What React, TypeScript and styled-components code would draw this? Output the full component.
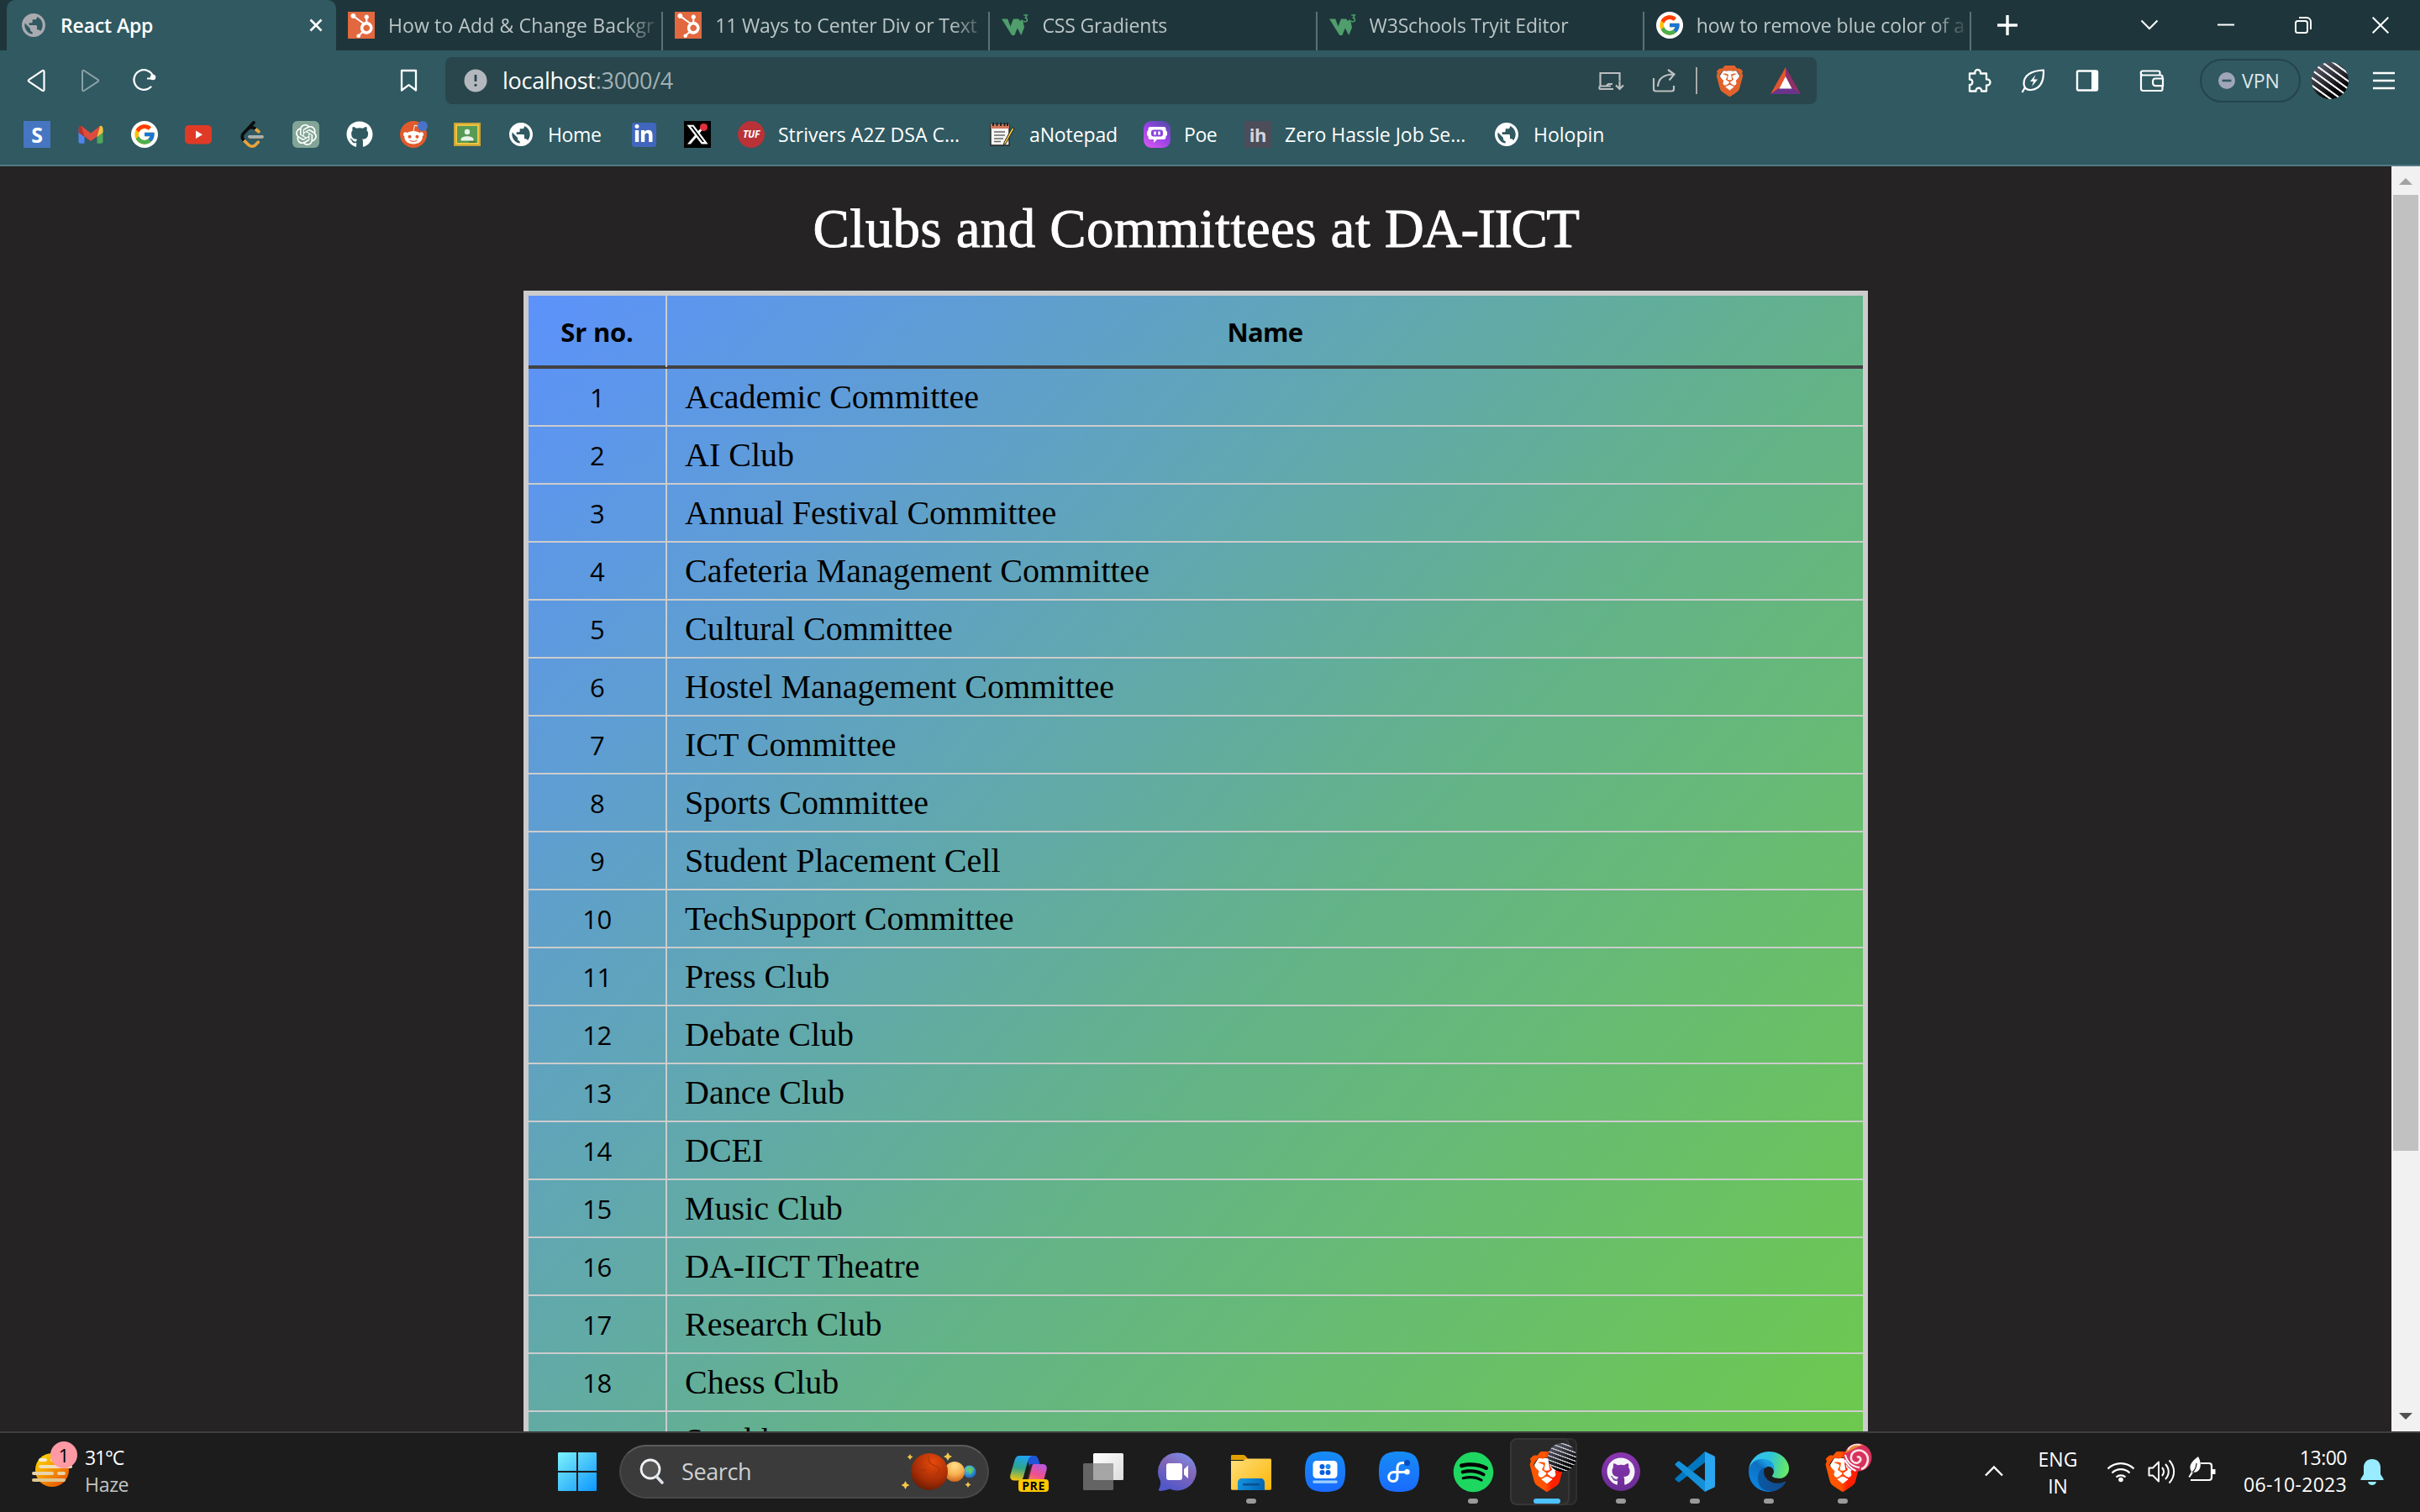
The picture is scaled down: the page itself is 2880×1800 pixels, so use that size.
import React from 'react';
import styled, { createGlobalStyle, css } from 'styled-components';
import { FaHubspot, FaGithub, FaSpotify, FaRedditAlien, FaLinkedinIn } from 'react-icons/fa';
import { FaXTwitter } from 'react-icons/fa6';
import { FcGoogle } from 'react-icons/fc';
import { SiOpenai, SiLeetcode, SiBrave } from 'react-icons/si';

const ui = '"Open Sans", "Noto Sans", sans-serif';
const serif = '"Liberation Serif", "Times New Roman", serif';

const Global = createGlobalStyle`
  * { box-sizing: border-box; }
  html, body { margin: 0; padding: 0; overflow: hidden; background: #252323; }
  svg { display: block; flex: none; }
`;

const Screen = styled.div`
  width: 2880px;
  height: 1800px;
  display: flex;
  flex-direction: column;
  font-family: ${ui};
  color: #fff;
`;

/* ---------- shared pieces ---------- */

const Glyph = styled.svg.attrs({ fill: 'none' })<{ $w: number; $h: number; $ml?: number }>`
  width: ${(p) => p.$w}px;
  height: ${(p) => p.$h}px;
  margin-left: ${(p) => p.$ml ?? 0}px;
`;

const Label = styled.span<{ $w?: number; $size?: number; $ls?: number; $ml?: number; $weight?: number; $color?: string }>`
  display: block;
  flex: none;
  white-space: nowrap;
  width: ${(p) => (p.$w ? `${p.$w}px` : 'auto')};
  margin-left: ${(p) => p.$ml ?? 0}px;
  font-size: ${(p) => p.$size ?? 23}px;
  line-height: 32px;
  letter-spacing: ${(p) => p.$ls ?? 0}px;
  font-weight: ${(p) => p.$weight ?? 400};
  color: ${(p) => p.$color ?? '#fff'};
`;

const Tile = styled.span<{ $bg?: string; $fg?: string; $radius?: number; $icon?: number; $w?: number; $h?: number }>`
  display: flex;
  flex: none;
  align-items: center;
  justify-content: center;
  width: ${(p) => p.$w ?? 32}px;
  height: ${(p) => p.$h ?? 32}px;
  border-radius: ${(p) => p.$radius ?? 0}px;
  background: ${(p) => p.$bg ?? 'transparent'};
  color: ${(p) => p.$fg ?? '#fff'};
  font-size: ${(p) => p.$icon ?? 28}px;
`;

const Avatar = styled.span<{ $size: number; $angle: number; $step: number; $line: string; $ml?: number }>`
  display: block;
  flex: none;
  width: ${(p) => p.$size}px;
  height: ${(p) => p.$size}px;
  margin-left: ${(p) => p.$ml ?? 0}px;
  border-radius: 50%;
  background:
    repeating-linear-gradient(
      ${(p) => p.$angle}deg,
      transparent 0 ${(p) => p.$step * 0.62}px,
      ${(p) => p.$line} ${(p) => p.$step * 0.7}px ${(p) => p.$step * 0.9}px,
      transparent ${(p) => p.$step}px
    ),
    linear-gradient(150deg, #66687a 0%, #3a3b44 35%, #050506 75%);
`;

const Globe = ({ color }: { color: string }) => (
  <Glyph $w={32} $h={32} viewBox="0 0 24 24">
    <path
      fill={color}
      d="M12 1.5C6.2 1.5 1.5 6.2 1.5 12S6.2 22.500 12 22.500 22.500 17.800 22.500 12 17.800 1.500 12 1.500zm-1 18.400c-3.950-.49-7-3.850-7-7.930 0-.62.08-1.210.21-1.790L9 15v1c0 1.100.9 2 2 2v1.930zm6.900-2.540c-.26-.81-1-1.390-1.900-1.390h-1v-3c0-.55-.45-1-1-1H8v-2h2c.55 0 1-.45 1-1V7h2c1.100 0 2-.9 2-2v-.41c2.930 1.190 5 4.060 5 7.410 0 2.080-.8 3.970-2.100 5.390z"
    />
  </Glyph>
);

const Hubspot = () => <Tile $bg="#e2683f" $icon={29}><FaHubspot /></Tile>;
const Google = () => <Tile $bg="#fff" $radius={16} $icon={28}><FcGoogle /></Tile>;
const W3 = () => (
  <Glyph $w={32} $h={32} viewBox="0 0 32 32">
    <path d="M0 7.500h7.200l3.300 9 3.500-9h6.200l1.400 2.200 3.400-1.500 2 9.500-3.800 9.300-4.400-8.600-3.400 8.600h-3.200z" fill="#4f9e6c" transform="translate(0,1)" />
    <path d="M26.300 4h4l-1.900 3.200c2.700.2 2.800 4.800-.5 4.600-1 0-1.500-.4-2-1.200" stroke="#4f9e6c" strokeWidth="1.500" />
  </Glyph>
);

/* ---------- tab strip ---------- */

const TabStrip = styled.div`
  height: 60px;
  flex: none;
  display: flex;
  background: #1e363b;
  padding-left: 8px;
`;

const ActiveTab = styled.div`
  width: 392px;
  height: 60px;
  padding: 0 16px;
  display: flex;
  align-items: center;
  background: #305961;
  border-radius: 10px 10px 0 0;
`;

const Tab = styled.div`
  width: 389.2px;
  height: 46px;
  margin-top: 14px;
  padding: 0 6px 14px 14px;
  display: flex;
  align-items: center;
  gap: 16px;
  border-right: 2px solid #577278;
`;

const TabTitle = styled.div<{ $ls?: number }>`
  flex: 1;
  white-space: nowrap;
  font-size: 23px;
  line-height: 32px;
  color: #bcc5c6;
  letter-spacing: ${(p) => p.$ls ?? -0.15}px;
  mask-image: linear-gradient(90deg, #000 88%, transparent 102%);
`;

const Spacer = styled.div`
  flex: 1;
`;

const WindowButtons = styled.div`
  display: flex;
  align-items: center;
  margin-left: 31px;
  height: 60px;
`;

/* ---------- address bar ---------- */

const Toolbar = styled.div`
  height: 72px;
  flex: none;
  display: flex;
  align-items: center;
  background: #305961;
  padding-left: 30px;
`;

const UrlBox = styled.div`
  width: 1632px;
  height: 56px;
  margin: 0 0 0 32px;
  padding: 0 18px 0 22px;
  display: flex;
  align-items: center;
  background: #28464b;
  border-radius: 8px;
`;

const Port = styled.span`
  color: #a3b1b4;
`;

const Divider = styled.div`
  width: 2px;
  height: 32px;
  margin: 0 20px 0 22px;
  background: #a9a9a9;
`;

const VpnPill = styled.div`
  width: 120px;
  height: 52px;
  margin-left: 42px;
  padding-left: 20px;
  display: flex;
  align-items: center;
  gap: 8px;
  border: 2px solid #25444b;
  border-radius: 26px;
`;

/* ---------- bookmarks ---------- */

const Bookmarks = styled.div`
  height: 66px;
  flex: none;
  display: flex;
  align-items: flex-start;
  padding: 12px 0 0 28px;
  gap: 32px;
  background: #305961;
  border-bottom: 2px solid #527a84;
`;

const Bookmark = styled.div<{ $w: number }>`
  width: ${(p) => p.$w}px;
  display: flex;
  gap: 16px;
`;

const Anchor = styled.span`
  position: relative;
  display: block;
  flex: none;
`;

const Dot = styled.span<{ $size: number; $color: string; $x: number; $y: number }>`
  position: absolute;
  right: ${(p) => p.$x}px;
  top: ${(p) => p.$y}px;
  width: ${(p) => p.$size}px;
  height: ${(p) => p.$size}px;
  border-radius: 50%;
  background: ${(p) => p.$color};
`;

const TinyText = styled.span<{ $size: number; $italic?: boolean }>`
  font-size: ${(p) => p.$size}px;
  font-weight: 700;
  font-style: ${(p) => (p.$italic ? 'italic' : 'normal')};
  line-height: 32px;
  letter-spacing: -0.3px;
`;

/* ---------- page ---------- */

const Viewport = styled.main`
  height: 1506px;
  flex: none;
  display: flex;
  overflow: hidden;
  background: #252323;
`;

const Content = styled.div`
  flex: 1;
  display: flex;
  flex-direction: column;
  align-items: center;
`;

const Heading = styled.h1`
  margin: 0;
  height: 148px;
  flex: none;
  font-family: ${serif};
  font-size: 65px;
  font-weight: 400;
  line-height: 148px;
  letter-spacing: 0.36px;
  -webkit-text-stroke: 0.9px #fff;
`;

const Acronym = styled.span`
  letter-spacing: -1.6px;
`;

const Table = styled.div`
  width: 1600px;
  height: 1755px;
  flex: none;
  border: 6px solid #cccccc;
  background: linear-gradient(to bottom right, #5c92fb 0%, #63b28a 50%, #6eca4b 91%, #70cf40 100%) padding-box;
  color: #000;
`;

const Row = styled.div<{ $head?: boolean }>`
  display: grid;
  grid-template-columns: 165px 1fr;
  height: ${(p) => (p.$head ? 87 : 69)}px;
  border-bottom: ${(p) => (p.$head ? '4px solid #404142' : '2px solid #cccccc')};
`;

const HeadCell = styled.div<{ $divided?: boolean; $ls?: number }>`
  font-size: 31px;
  font-weight: 700;
  line-height: 83px;
  padding-top: 2px;
  letter-spacing: ${(p) => p.$ls ?? 0}px;
  text-align: center;
  ${(p) => p.$divided && css`border-right: 2px solid #cccccc;`}
`;

const NumCell = styled.div`
  padding-top: 1px;
  font-size: 31px;
  line-height: 67px;
  letter-spacing: -0.5px;
  text-align: center;
  border-right: 2px solid #cccccc;
`;

const NameCell = styled.div`
  padding-left: 21px;
  font-family: ${serif};
  font-size: 40px;
  line-height: 67px;
`;

const Scrollbar = styled.div`
  width: 34px;
  flex: none;
  display: flex;
  flex-direction: column;
  align-items: center;
  background: #f1f1f1;
  padding: 14px 0;
`;

const Thumb = styled.div`
  width: 30px;
  height: 1138px;
  margin-top: 12px;
  background: #c1c1c1;
`;

/* ---------- taskbar ---------- */

const Taskbar = styled.footer`
  height: 96px;
  flex: none;
  display: flex;
  background: #1c1c1c;
  border-top: 2px solid #3f3f40;
`;

const Weather = styled.div`
  width: 643px;
  padding: 10px 0 0 36px;
  display: flex;
  gap: 5px;
`;

const WeatherText = styled.div`
  padding-top: 3px;
`;

const Lines = styled.div<{ $align?: string; $w?: number; $ml?: number }>`
  width: ${(p) => (p.$w ? `${p.$w}px` : 'auto')};
  margin-left: ${(p) => p.$ml ?? 0}px;
  padding-top: 15px;
  text-align: ${(p) => p.$align ?? 'left'};
`;

const Cell = styled.div`
  position: relative;
  width: 88px;
  height: 94px;
  padding-top: 22px;
  display: flex;
  flex-direction: column;
  align-items: center;
`;

const Indicator = styled.div<{ $active?: boolean }>`
  width: ${(p) => (p.$active ? 32 : 12)}px;
  height: 6px;
  margin-top: 8px;
  border-radius: 3px;
  background: ${(p) => (p.$active ? '#4cc2ff' : '#9a9a9a')};
  z-index: 1;
`;

const SearchBox = styled.div`
  width: 440px;
  height: 64px;
  margin: 14px 4px 0 6px;
  padding: 0 12px 0 22px;
  display: flex;
  align-items: center;
  background: #3b3b3b;
  border: 2px solid #484848;
  border-top-color: #5c5c5c;
  border-radius: 32px;
`;

const StackBack = styled.div`
  position: absolute;
  left: 36px;
  top: 6px;
  width: 44px;
  height: 80px;
  border-radius: 8px;
  background: #252525;
  border: 2px solid #303030;
`;

const StackFront = styled(StackBack)`
  left: 0;
  width: 71px;
  background: #2a2a2a;
  border-color: #373737;
`;

const AppIcon = styled.div`
  position: relative;
  width: 48px;
  height: 48px;
  display: flex;
  justify-content: center;
  align-items: center;
`;

const Badge = styled.div<{ $left: number; $top: number }>`
  position: absolute;
  left: ${(p) => p.$left}px;
  top: ${(p) => p.$top}px;
`;

const WeatherBadge = styled.div`
  position: absolute;
  left: 24px;
  top: 0;
  width: 32px;
  height: 32px;
  border-radius: 50%;
  background: #ff99a4;
  color: #000;
  font-size: 22px;
  line-height: 32px;
  text-align: center;
`;

const PreTag = styled.div`
  position: absolute;
  left: 11px;
  top: 33px;
  width: 36px;
  height: 15px;
  border-radius: 4px;
  background: #ffc800;
  color: #000;
  font-size: 14px;
  font-weight: 700;
  line-height: 15px;
  letter-spacing: 0.6px;
  text-align: center;
`;

const Tray = styled.div`
  margin-left: auto;
  display: flex;
  padding-right: 43px;
`;

const TrayGlyph = styled(Glyph)<{ $top: number }>`
  margin-top: ${(p) => p.$top}px;
`;

const Clock = styled.div`
  width: 155px;
  padding-top: 13px;
  display: flex;
  flex-direction: column;
  align-items: flex-end;
`;

/* ---------- app icons ---------- */

const Lion = ({ size, from, to, id }: { size: number; from: string; to: string; id: string }) => (
  <Glyph $w={size} $h={size} viewBox="0 0 24 24">
    <defs>
      <linearGradient id={id} x1="0" y1="0" x2="24" y2="0" gradientUnits="userSpaceOnUse">
        <stop offset=".45" stopColor={from} />
        <stop offset=".62" stopColor={to} />
      </linearGradient>
    </defs>
    <path d="M7 4h10l2.500 4-2.500 8-5 4-5-4-2.500-8z" fill="#fff" />
    <SiBrave size={24} fill={`url(#${id})`} />
  </Glyph>
);

const LeetCode = () => (
  <Glyph $w={32} $h={32} viewBox="0 0 24 24">
    <defs>
      <linearGradient id="lc" x1="3" y1="5" x2="17" y2="19" gradientUnits="userSpaceOnUse">
        <stop offset=".5" stopColor="#0c0c0c" />
        <stop offset=".51" stopColor="#e8a33c" />
      </linearGradient>
    </defs>
    <SiLeetcode size={24} fill="url(#lc)" />
    <path d="M9.500 14.100h11.500" stroke="#a8b0b2" strokeWidth="2.600" strokeLinecap="round" />
  </Glyph>
);

const Swirl = () => (
  <Glyph $w={34} $h={34} viewBox="0 0 34 34">
    <circle cx="17" cy="17" r="16.500" fill="#d8315c" />
    <path d="M2 12A16 16 0 0 1 24 2.500L18 4z" fill="#e88a3a" />
    <path d="M16 17c3-2 6 2 3 5-4 4-11 0-10-6 1-7 10-10 16-5 7 6 4 17-4 20" stroke="#fbe3e6" strokeWidth="2.600" />
    <path d="M2 14c2 8 8 14 17 15M1.500 20c3 6 7 10 13 13" stroke="#fff" strokeWidth="2" />
    <path d="M5 8C8 3 14 1 20 2" stroke="#fbe3e6" strokeWidth="1.800" />
  </Glyph>
);

const Edge = () => (
  <Glyph $w={48} $h={48} viewBox="0 0 256 256">
    <defs>
      <linearGradient id="eg1" x1="58" y1="177" x2="237" y2="177" gradientUnits="userSpaceOnUse">
        <stop stopColor="#0c59a4" />
        <stop offset="1" stopColor="#114a8b" />
      </linearGradient>
      <linearGradient id="eg2" x1="150" y1="100" x2="40" y2="225" gradientUnits="userSpaceOnUse">
        <stop stopColor="#1b9de2" />
        <stop offset=".3" stopColor="#0f6fc0" />
        <stop offset="1" stopColor="#0a84e0" />
      </linearGradient>
      <linearGradient id="eg3" x1="20" y1="60" x2="250" y2="120" gradientUnits="userSpaceOnUse">
        <stop stopColor="#35c1f1" />
        <stop offset=".45" stopColor="#2fc4dc" />
        <stop offset=".85" stopColor="#5adf78" />
        <stop offset="1" stopColor="#66eb6e" />
      </linearGradient>
    </defs>
    <path fill="url(#eg3)" d="M152.330 148.860c-.81 1.050-3.300 2.500-3.300 5.660 0 2.610 1.700 5.120 4.720 7.230 14.380 10 41.490 8.680 41.560 8.680A59.560 59.560 0 0 0 225.580 162a61.380 61.380 0 0 0 30.430-52.880c.26-22.410-8-37.310-11.340-43.910C223.450 23.790 177.710 0 128 0A128 128 0 0 0 0 126.200C.48 89.660 36.800 60.200 80 60.200c3.500 0 23.460.34 42 10.070 16.340 8.580 24.900 18.940 30.850 29.210 6.180 10.670 7.280 24.150 7.280 29.520s-2.740 13.330-7.800 19.860z" />
    <path fill="url(#eg2)" d="M105.730 241.420A79.200 79.200 0 0 1 83 220.080 80.720 80.720 0 0 1 112.500 100c3.120-1.470 8.450-4.130 15.540-4a32.350 32.350 0 0 1 25.690 13 31.880 31.880 0 0 1 6.360 18.660c0-.21 24.460-79.600-80-79.600-43.900 0-80 41.660-80 78.210a130.150 130.150 0 0 0 12.110 56 128 128 0 0 0 156.380 67.110 75.550 75.550 0 0 1-62.780-8z" />
    <path fill="url(#eg1)" d="M231.050 190.540a93.730 93.730 0 0 1-10.540 4.710 101.870 101.870 0 0 1-35.900 6.460c-47.320 0-88.540-32.550-88.540-74.320A31.480 31.480 0 0 1 112.500 100c-42.800 1.800-53.800 46.400-53.800 72.530 0 73.880 68.090 81.370 82.760 81.370 7.910 0 19.840-2.300 27-4.560l1.310-.44a128.340 128.340 0 0 0 66.630-52.800 4 4 0 0 0-5.350-5.560z" />
  </Glyph>
);

const VsCode = () => (
  <Glyph $w={48} $h={48} viewBox="0 0 48 48">
    <path d="M36 0L1 31.500c-.8.700-.8 1.500 0 2.200l2.600 2.400c.7.600 1.500.6 2.200.1L36 13z" fill="#0078c0" />
    <path d="M36 48L1 16.500c-.8-.7-.8-1.500 0-2.200l2.600-2.400c.7-.6 1.500-.6 2.200-.1L36 35z" fill="#1390d8" />
    <path d="M36 0l10.500 5c.9.500 1.500 1.300 1.500 2.300v33.400c0 1-.6 1.800-1.500 2.300L36 48z" fill="#29a7f0" />
  </Glyph>
);

const Copilot = () => (
  <Glyph $w={48} $h={48} viewBox="0 0 48 48">
    <defs>
      <linearGradient id="cp1" x1="12" y1="5" x2="8" y2="34" gradientUnits="userSpaceOnUse">
        <stop stopColor="#1fa3ee" />
        <stop offset=".5" stopColor="#2fa58a" />
        <stop offset="1" stopColor="#f2c511" />
      </linearGradient>
      <linearGradient id="cp2" x1="40" y1="14" x2="30" y2="38" gradientUnits="userSpaceOnUse">
        <stop stopColor="#b05ae8" />
        <stop offset=".6" stopColor="#f0508c" />
        <stop offset="1" stopColor="#f9824e" />
      </linearGradient>
    </defs>
    <path d="M20 5h10c3 0 4 2 5 5l1.500 5h-6c-3 0-5 1-6 4z" fill="#1f55d6" />
    <path d="M13 5h14c-3 1-4 3-5 7l-5 18c-1 3-2 4.500-5 4.500H6c-4 0-5.500-3-4.500-7l5-17C7.500 7 9 5 13 5z" fill="url(#cp1)" />
    <path d="M30 15h10c4 0 5.500 3 4.500 7l-3 11c-1 3-3 4-6 4H12c3-1 8 0 9.500-3l4-15c1-3 2-4 4.500-4z" fill="url(#cp2)" />
    <path d="M25 15h3l-5 19h-6z" fill="#1c1c1c" opacity=".75" />
  </Glyph>
);

const TaskView = () => (
  <Glyph $w={48} $h={48} viewBox="0 0 48 48">
    <defs>
      <linearGradient id="tv" x1="12" y1="2" x2="48" y2="34" gradientUnits="userSpaceOnUse">
        <stop stopColor="#fff" />
        <stop offset="1" stopColor="#dcdcdc" />
      </linearGradient>
    </defs>
    <rect x="12" y="2" width="36" height="32" rx="1.500" fill="url(#tv)" />
    <rect x="0" y="14" width="36" height="32" rx="1.500" fill="#646464" />
    <path d="M12 14h22.500a1.500 1.500 0 0 1 1.500 1.500V34H13.500a1.500 1.500 0 0 1-1.500-1.500z" fill="#a5a5a5" />
  </Glyph>
);

const Chat = () => (
  <Glyph $w={48} $h={48} viewBox="0 0 48 48">
    <defs>
      <linearGradient id="ch" x1="36" y1="4" x2="16" y2="44" gradientUnits="userSpaceOnUse">
        <stop stopColor="#7a8be6" />
        <stop offset=".4" stopColor="#8467b8" />
        <stop offset="1" stopColor="#5257c9" />
      </linearGradient>
    </defs>
    <path d="M24.500 1.500a22.500 22.500 0 1 1-9.500 43c-4 1.500-8 2.500-11.500 2.500-1.500 0-2-1-1.300-2.200 1.500-3 2.300-6.300 1.800-9.800A22.500 22.500 0 0 1 24.500 1.500z" fill="url(#ch)" />
    <rect x="11" y="14" width="19" height="20" rx="3" fill="#fff" />
    <path d="M32 21l5-4.500v15.500l-5-4.500z" fill="#fff" />
  </Glyph>
);

const Folder = () => (
  <Glyph $w={48} $h={48} viewBox="0 0 48 48">
    <defs>
      <linearGradient id="fo" x1="6" y1="8" x2="44" y2="46" gradientUnits="userSpaceOnUse">
        <stop stopColor="#ffdc72" />
        <stop offset="1" stopColor="#fbb80e" />
      </linearGradient>
      <linearGradient id="fb" x1="8" y1="32" x2="40" y2="46" gradientUnits="userSpaceOnUse">
        <stop stopColor="#1597e0" />
        <stop offset="1" stopColor="#0062b4" />
      </linearGradient>
    </defs>
    <path d="M0 5.500C0 4.500.7 4 1.500 4H14c1.500 0 2.500.5 3.500 1.500L21 10H0z" fill="#e0a100" />
    <path d="M0 11h14l5-2.500h27.500c1 0 1.500.7 1.500 1.500v34c0 1-.6 1.800-1.500 1.800h-45C.6 45.800 0 45 0 44z" fill="url(#fo)" />
    <path d="M8 46V37c0-3 2-5 5-5h22c3 0 5 2 5 5v9z" fill="url(#fb)" />
    <rect x="14" y="38" width="20" height="2.400" rx="1" fill="#0a4f8f" />
  </Glyph>
);

const blue = (
  <>
    <defs>
      <linearGradient id="bl" x1="24" y1="0" x2="24" y2="48" gradientUnits="userSpaceOnUse">
        <stop stopColor="#168cf4" />
        <stop offset="1" stopColor="#1a6bff" />
      </linearGradient>
    </defs>
    <path d="M24 0c18 0 24 6 24 24s-6 24-24 24S0 42 0 24 6 0 24 0z" fill="url(#bl)" />
  </>
);

const Dex = () => (
  <Glyph $w={48} $h={48} viewBox="0 0 48 48">
    {blue}
    <rect x="9.500" y="11" width="29" height="21" rx="4.500" fill="#fff" />
    <rect x="9.500" y="34.500" width="29" height="3.200" rx="1" fill="#9fd0ff" />
    <circle cx="20.500" cy="18" r="3" fill="#0a5fe0" />
    <circle cx="27.500" cy="18" r="3" fill="#1f8af5" />
    <circle cx="20.500" cy="25" r="3" fill="#0a5fe0" />
    <circle cx="27.500" cy="25" r="3" fill="#0a5fe0" />
  </Glyph>
);

const Flow = () => (
  <Glyph $w={48} $h={48} viewBox="0 0 48 48">
    {blue}
    <path d="M33 13.500h-5c-4 0-6 2.500-6 6v10c0 4-2 6-5 6-3.200 0-5.300-2-5.300-4.800 0-3.700 2.300-6.200 6.300-6.200h15" stroke="#fff" strokeWidth="3" strokeLinecap="round" />
    <circle cx="33.500" cy="13.500" r="3.500" fill="#0a4cc0" />
    <circle cx="33.500" cy="24.300" r="3.200" fill="#fff" />
  </Glyph>
);

const Planets = () => (
  <Glyph $w={90} $h={52} viewBox="0 0 90 52">
    <defs>
      <radialGradient id="p1" cx=".6" cy=".25" r=".85">
        <stop stopColor="#e84a0a" />
        <stop offset=".6" stopColor="#a62d06" />
        <stop offset="1" stopColor="#5c1804" />
      </radialGradient>
      <radialGradient id="p2" cx=".5" cy=".2" r=".9">
        <stop stopColor="#ffdf8a" />
        <stop offset=".5" stopColor="#f8b050" />
        <stop offset="1" stopColor="#c0500e" />
      </radialGradient>
      <radialGradient id="p3" cx=".4" cy=".3" r=".8">
        <stop stopColor="#5fd8c8" />
        <stop offset="1" stopColor="#1458c8" />
      </radialGradient>
    </defs>
    <circle cx="81" cy="26" r="7.500" fill="url(#p3)" />
    <path d="M79 21c3-1 5 0 7 2l-2 3-2 4-2-4-3-2z" fill="#5cc86a" />
    <circle cx="63" cy="26" r="12" fill="url(#p2)" />
    <circle cx="33" cy="26" r="22" fill="url(#p1)" />
    <path d="M32 8c-2 7 5 10 10 12s3 8-2 10M15 24c5-3 9 2 14 0" stroke="#a8320a" strokeWidth="1.500" opacity=".7" />
    <path d="M10 5l1.200 2.300L13.500 8.500l-2.300 1.200L10 12l-1.200-2.300L6.500 8.500l2.300-1.200zM55 3l1.700 3.300L60 8l-3.300 1.700L55 13l-1.700-3.300L50 8l3.300-1.700zM4.500 37l1.700 3.300L9.500 42l-3.300 1.700L4.500 47l-1.700-3.300L-.5 42l3.300-1.700zM79 38l1.200 2.300 2.300 1.200-2.300 1.200L79 45l-1.200-2.300-2.300-1.200 2.300-1.200z" fill="#f4c84a" />
  </Glyph>
);

const names = [
  'Academic Committee', 'AI Club', 'Annual Festival Committee', 'Cafeteria Management Committee', 'Cultural Committee',
  'Hostel Management Committee', 'ICT Committee', 'Sports Committee', 'Student Placement Cell', 'TechSupport Committee',
  'Press Club', 'Debate Club', 'Dance Club', 'DCEI', 'Music Club', 'DA-IICT Theatre', 'Research Club', 'Chess Club', 'Sambhav',
];

export default function App() {
  return (
    <Screen>
      <Global />

      <TabStrip>
        <ActiveTab>
          <Globe color="#a9aab0" />
          <Label $ml={16} $weight={600} $ls={-0.15} $w={296}>React App</Label>
          <Glyph $w={16} $h={16} viewBox="0 0 16 16"><path d="M1.500 1.500l13 13M14.500 1.500l-13 13" stroke="#fff" strokeWidth="2.600" /></Glyph>
        </ActiveTab>
        <Tab><Hubspot /><TabTitle $ls={0.12}>How to Add &amp; Change Backgr</TabTitle></Tab>
        <Tab><Hubspot /><TabTitle>11 Ways to Center Div or Text</TabTitle></Tab>
        <Tab><W3 /><TabTitle>CSS Gradients</TabTitle></Tab>
        <Tab><W3 /><TabTitle>W3Schools Tryit Editor</TabTitle></Tab>
        <Tab><Google /><TabTitle $ls={-0.05}>how to remove blue color of a</TabTitle></Tab>
        <WindowButtons>
          <Glyph $w={24} $h={24} viewBox="0 0 24 24"><path d="M12 1v22M1 12h22" stroke="#fff" strokeWidth="3.400" strokeLinecap="round" /></Glyph>
          <Glyph $ml={146} $w={22} $h={14} viewBox="0 0 22 14"><path d="M1.500 1.500L11 11l9.500-9.500" stroke="#fff" strokeWidth="2" /></Glyph>
          <Glyph $ml={70} $w={20} $h={20} viewBox="0 0 20 20"><path d="M0 9.500h20" stroke="#fff" strokeWidth="2" /></Glyph>
          <Glyph $ml={72} $w={20} $h={20} viewBox="0 0 20 20"><rect x="1" y="5" width="14" height="14" rx="2.500" stroke="#fff" strokeWidth="2" /><path d="M5 1h9a5 5 0 0 1 5 5v9" stroke="#fff" strokeWidth="2" /></Glyph>
          <Glyph $ml={72} $w={20} $h={20} viewBox="0 0 20 20"><path d="M.7.700l18.600 18.600M19.300.700L.7 19.300" stroke="#fff" strokeWidth="2" /></Glyph>
        </WindowButtons>
      </TabStrip>

      <Toolbar>
        <Glyph $w={26} $h={28} viewBox="0 0 26 28"><path d="M22.500 3.200v21.600c0 1.400-1.400 1.700-2.400.9L4.500 15.200c-1-.8-1-1.700 0-2.400L20.100 2.300c1-.8 2.400-.5 2.400.9z" stroke="#fff" strokeWidth="2.200" /></Glyph>
        <Glyph $ml={39} $w={26} $h={28} viewBox="0 0 26 28"><path d="M3 3.200v21.600c0 1.400 1.400 1.700 2.400.9L21.500 15.200c1-.8 1-1.700 0-2.400L5.400 2.300C4.400 1.500 3 1.800 3 3.200z" stroke="#8ba2a6" strokeWidth="2" /></Glyph>
        <Glyph $ml={36} $w={30} $h={28} viewBox="0 0 30 28"><path d="M22.500 21.500A11.800 11.800 0 1 1 25.500 9.500" stroke="#fff" strokeWidth="2.300" strokeLinecap="round" /><circle cx="25" cy="10" r="3.300" fill="#fff" /><path d="M18 11.500h9" stroke="#fff" strokeWidth="2" /></Glyph>
        <Glyph $ml={289} $w={22} $h={28} viewBox="0 0 22 28"><path d="M2 2h17v23.500l-8.500-6.300L2 25.500z" stroke="#fff" strokeWidth="2.300" strokeLinejoin="round" /></Glyph>
        <UrlBox>
          <Glyph $w={28} $h={28} viewBox="0 0 28 28"><circle cx="14" cy="14" r="13.500" fill="#b4b8be" /><path d="M14 7v8" stroke="#28464b" strokeWidth="2.800" /><circle cx="14" cy="19.300" r="1.600" fill="#28464b" /></Glyph>
          <Label $ml={18} $size={27} $ls={-0.27}>localhost<Port>:3000/4</Port></Label>
          <Spacer />
          <Glyph $w={32} $h={28} viewBox="0 0 32 28"><path d="M16 20.500H3.500V5h23v9M2 24h17M2.500 20.500V24M11 20l2-2h5" stroke="#bcbfc1" strokeWidth="2.200" /><path d="M26.500 14.500v9M22 19.500l4.500 4.500 4.500-4.500" stroke="#bcbfc1" strokeWidth="2.200" /></Glyph>
          <Glyph $ml={33} $w={30} $h={28} viewBox="0 0 30 28"><path d="M2 11v13c0 1.500 1 2.500 2.500 2.500h19c1.500 0 2.500-1 2.500-2.500v-4" stroke="#bcbfc1" strokeWidth="2.200" /><path d="M7 21c.5-9 6-14.500 19-14.500M19 1l7.500 5.500-6 7" stroke="#bcbfc1" strokeWidth="2.200" /></Glyph>
          <Divider />
          <Lion id="br0" size={37} from="#e2622c" to="#e2622c" />
          <Glyph $ml={29} $w={38} $h={34} viewBox="0 0 38 34"><path d="M19 1v12l-7 13L1 33z" fill="#e2562f" /><path d="M19 1l18 32-11-7-7-13z" fill="#8f2f68" /><path d="M1 33l10-7h16l10 7z" fill="#6a348c" /><path d="M19 12l7.500 14.500h-15z" fill="#fff" /></Glyph>
        </UrlBox>
        <Glyph $ml={179} $w={30} $h={30} viewBox="0 0 30 30"><path d="M3 6.500h6.500c-1.500-6 7.500-6 6.500 0h7v7c6-1 6 8 0 7v7h-6c1-5-7-5-6.500 0H3V20c4.500.5 4.500-7 0-6.500z" stroke="#fff" strokeWidth="2.300" strokeLinejoin="round" /></Glyph>
        <Glyph $ml={34} $w={30} $h={30} viewBox="0 0 30 30"><path d="M27 2.500C12 3 3.500 9 3.500 18.500c0 5 3.500 8 8.500 7.500C22 25 27.500 17 27 2.500zM5 23l-3.500 6" stroke="#fff" strokeWidth="2.200" strokeLinejoin="round" /><path d="M17.500 8l-6.500 8h4l-2 6 7-8.500h-4.500z" fill="#fff" /></Glyph>
        <Glyph $ml={35} $w={28} $h={28} viewBox="0 0 28 28"><rect x="2" y="2.500" width="24" height="23" rx="1.500" stroke="#fff" strokeWidth="2.400" /><path d="M19 3h7v22h-7z" fill="#fff" /></Glyph>
        <Glyph $ml={48} $w={30} $h={28} viewBox="0 0 30 28"><path d="M2 5v18.500C2 25 3 26 4.500 26h21c1 0 2-1 2-2v-4M27.500 12V9.500c0-1-.8-2-2-2H4c-3 0-3-5 0-5h18.500c1.500 0 2 1 2 2v3" stroke="#fff" strokeWidth="2.200" /><path d="M28 11.500h-9c-2 0-3 1-3 4.300s1 4.300 3 4.300h9z" stroke="#fff" strokeWidth="2.200" /></Glyph>
        <VpnPill>
          <Glyph $w={20} $h={20} viewBox="0 0 20 20"><circle cx="10" cy="10" r="10" fill="#a0a6b8" /><path d="M4.500 10h11" stroke="#305961" strokeWidth="2.600" /></Glyph>
          <Label $color="#dfe6e8">VPN</Label>
        </VpnPill>
        <Avatar $ml={13} $size={44} $angle={36} $step={7.4} $line="#f4f4f6" />
        <Glyph $ml={29} $w={26} $h={22} viewBox="0 0 26 22"><path d="M0 2h26M0 11h26M0 20h26" stroke="#fff" strokeWidth="2.400" /></Glyph>
      </Toolbar>

      <Bookmarks>
        <Tile $bg="#4676c2"><TinyText $size={25}>S</TinyText></Tile>
        <Glyph $w={32} $h={32} viewBox="0 0 32 32"><path d="M1.500 9v15.500c0 1.400 1 2.300 2.300 2.300H8.500V14z" fill="#5285ec" /><path d="M30.500 9v15.500c0 1.400-1 2.300-2.300 2.300H23.500V14z" fill="#4fa65a" /><path d="M1.500 9.300v4.400l7 5.300V11L6 7C4 4.500 1.500 6.500 1.500 9.300z" fill="#b5332a" /><path d="M30.500 9.300v4.400l-7 5.300V11L26 7c2-2.500 4.500-.5 4.500 2.300z" fill="#f2c040" /><path d="M5 6l11 8.500L27 6l-3.500 12.500L16 24l-7.500-5.500z" fill="#dc4b3e" /></Glyph>
        <Google />
        <Glyph $w={32} $h={32} viewBox="0 0 32 32"><rect y="5" width="32" height="22.500" rx="5" fill="#e03a26" /><path d="M13 11.500l8 4.700-8 4.700z" fill="#fff" /></Glyph>
        <LeetCode />
        <Tile $bg="#83a597" $radius={6} $icon={25}><SiOpenai /></Tile>
        <Tile $icon={32}><FaGithub /></Tile>
        <Anchor><Tile $bg="#e25a2b" $radius={16} $icon={26}><FaRedditAlien /></Tile><Dot $size={12} $color="#4a72c8" $x={-1} $y={0} /></Anchor>
        <Glyph $w={32} $h={32} viewBox="0 0 32 32"><rect y="2" width="32" height="28" fill="#c9a437" /><rect x="2" y="4" width="28" height="24" fill="#efc441" /><rect x="4" y="6" width="24" height="20" fill="#579a55" /><circle cx="16" cy="13" r="3.200" fill="#e8f2e6" /><path d="M8.500 22c0-5 15-5 15 0v1.500h-15z" fill="#e8f2e6" /><path d="M18 26h8v-2h-8z" fill="#3d7a3e" /></Glyph>
        <Bookmark $w={114}><Globe color="#fff" /><Label $ls={-0.4}>Home</Label></Bookmark>
        <Tile><Tile $w={29} $h={29} $bg="#4166bd" $radius={3} $icon={24}><FaLinkedinIn /></Tile></Tile>
        <Anchor><Tile $bg="#000" $icon={28}><FaXTwitter /></Tile><Dot $size={9} $color="#e5303c" $x={4} $y={3} /></Anchor>
        <Bookmark $w={267}><Tile $bg="#b93238" $radius={16}><TinyText $size={12} $italic>TUF</TinyText></Tile><Label>Strivers A2Z DSA C...</Label></Bookmark>
        <Bookmark $w={152}>
          <Glyph $w={32} $h={32} viewBox="0 0 32 32"><path d="M2 5h22v24H2z" fill="#f6f6f4" stroke="#222" strokeWidth="1.400" /><path d="M2 4h22v5H2z" fill="#d2785a" /><path d="M5 2v4M9.500 2v4M14 2v4M18.500 2v4M22 2v4" stroke="#222" strokeWidth="2" /><path d="M6 13h13M6 17h13M6 21h11M6 24.500h8" stroke="#666" strokeWidth="1.400" /><path d="M27.500 8l2.500 1-10 18-2.500 1.500.5-3z" fill="#eec93c" stroke="#222" strokeWidth="1" /></Glyph>
          <Label $ls={-0.12}>aNotepad</Label>
        </Bookmark>
        <Bookmark $w={88}>
          <Tile $bg="linear-gradient(215deg, #5a4ab0 10%, #9a42e8 50%, #e05af0 100%)" $radius={9}>
            <Glyph $w={26} $h={22} viewBox="0 0 26 22"><path d="M5 2h16c2 0 2.500 1 2.500 3v1l1.500 2v4l-1.500 1v1c0 2-1 3-2.500 3H13l-4 4v-4H5c-2 0-2.500-1-2.500-3v-1L1 12V8l1.500-2V5c0-2 .5-3 2.500-3z" fill="#fff" /><rect x="6" y="5.500" width="14" height="8" rx="3" fill="#8a44dc" /><path d="M10.500 7.500v4M15.500 7.500v4" stroke="#fff" strokeWidth="2.600" /></Glyph>
          </Tile>
          <Label $ls={-0.4}>Poe</Label>
        </Bookmark>
        <Bookmark $w={264}><Tile $bg="#4c4d59" $fg="#d4d4dc"><TinyText $size={22}>ih</TinyText></Tile><Label>Zero Hassle Job Se...</Label></Bookmark>
        <Bookmark $w={140}><Globe color="#fff" /><Label>Holopin</Label></Bookmark>
      </Bookmarks>

      <Viewport>
        <Content>
          <Heading>Clubs and Committees at <Acronym>DA-IICT</Acronym></Heading>
          <Table>
            <Row $head><HeadCell $divided $ls={-0.2}>Sr no.</HeadCell><HeadCell $ls={-0.7}>Name</HeadCell></Row>
            {names.map((name, i) => (
              <Row key={name}><NumCell>{i + 1}</NumCell><NameCell>{name}</NameCell></Row>
            ))}
          </Table>
        </Content>
        <Scrollbar>
          <Glyph $w={16} $h={8} viewBox="0 0 16 8"><path d="M8 0l8 8H0z" fill="#a3a3a3" /></Glyph>
          <Thumb />
          <Spacer />
          <Glyph $w={16} $h={8} viewBox="0 0 16 8"><path d="M0 0h16L8 8z" fill="#505050" /></Glyph>
        </Scrollbar>
      </Viewport>

      <Taskbar>
        <Weather>
          <Anchor>
            <Glyph $w={60} $h={60} viewBox="0 0 60 60">
              <defs>
                <linearGradient id="sun" x1="12" y1="18" x2="40" y2="52" gradientUnits="userSpaceOnUse"><stop stopColor="#ffd000" /><stop offset="1" stopColor="#e85400" /></linearGradient>
              </defs>
              <circle cx="26" cy="34" r="20" fill="url(#sun)" />
              <path d="M12 22h6M26 22h4" stroke="#f5ead0" strokeWidth="4" strokeLinecap="round" />
              <path d="M12 30h36" stroke="#f0e0bc" strokeWidth="4" strokeLinecap="round" />
              <path d="M4 38h22M34 38h6" stroke="#e8d4ac" strokeWidth="4" strokeLinecap="round" />
              <path d="M4 46h36" stroke="#e0c690" strokeWidth="4" strokeLinecap="round" />
            </Glyph>
            <WeatherBadge>1</WeatherBadge>
          </Anchor>
          <WeatherText>
            <Label $ls={-1.1}>31°C</Label>
            <Label $ls={-0.3} $color="#c4c4c4">Haze</Label>
          </WeatherText>
        </Weather>

        <Cell>
          <Glyph $w={46} $h={48} viewBox="0 0 46 48">
            <defs>
              <linearGradient id="win" x1="0" y1="0" x2="46" y2="48" gradientUnits="userSpaceOnUse"><stop stopColor="#7df4fd" /><stop offset=".45" stopColor="#4cc8fa" /><stop offset="1" stopColor="#0a96ff" /></linearGradient>
            </defs>
            <path d="M1.500 1H22v22H0V2.500C0 1.500.5 1 1.500 1zM24 1h20.500c1 0 1.500.5 1.500 1.500V23H24zM0 25h22v22H1.500C.5 47 0 46.500 0 45.500zM24 25h22v20.500c0 1-.5 1.500-1.500 1.500H24z" fill="url(#win)" />
          </Glyph>
        </Cell>
        <SearchBox>
          <Glyph $w={30} $h={32} viewBox="0 0 30 32"><circle cx="13" cy="13" r="11" fill="#555" stroke="#eef0f4" strokeWidth="2.800" /><path d="M20.500 22l6.500 7" stroke="#dfe3ea" strokeWidth="3.600" strokeLinecap="round" /></Glyph>
          <Label $ml={20} $size={27} $ls={-0.4} $color="#d0d0d0">Search</Label>
          <Spacer />
          <Planets />
        </SearchBox>

        <Cell><AppIcon><Copilot /><PreTag>PRE</PreTag></AppIcon></Cell>
        <Cell><AppIcon><TaskView /></AppIcon></Cell>
        <Cell><AppIcon><Chat /></AppIcon></Cell>
        <Cell><AppIcon><Folder /></AppIcon><Indicator /></Cell>
        <Cell><AppIcon><Dex /></AppIcon></Cell>
        <Cell><AppIcon><Flow /></AppIcon></Cell>
        <Cell><AppIcon><Tile $bg="#000" $fg="#1ed760" $w={44} $h={44} $radius={22} $icon={49}><FaSpotify /></Tile></AppIcon><Indicator /></Cell>
        <Cell>
          <StackBack />
          <StackFront />
          <AppIcon><Lion id="br1" size={48} from="#ff5500" to="#ff2000" /><Badge $left={25} $top={-10}><Avatar $size={34} $angle={20} $step={4.8} $line="#c4c6cc" /></Badge></AppIcon>
          <Indicator $active />
        </Cell>
        <Cell><AppIcon><Tile $bg="linear-gradient(#8a36b0, #6a2c94)" $w={46} $h={46} $radius={23} $fg="#f4f4f8" $icon={34}><FaGithub /></Tile></AppIcon><Indicator /></Cell>
        <Cell><AppIcon><VsCode /></AppIcon><Indicator /></Cell>
        <Cell><AppIcon><Edge /></AppIcon><Indicator /></Cell>
        <Cell><AppIcon><Lion id="br2" size={48} from="#ff5500" to="#ff2000" /><Badge $left={25} $top={-10}><Swirl /></Badge></AppIcon><Indicator /></Cell>

        <Tray>
          <TrayGlyph $top={38} $w={24} $h={14} viewBox="0 0 24 14"><path d="M2 12.500l10-10 10 10" stroke="#fff" strokeWidth="2.400" /></TrayGlyph>
          <Lines $ml={34} $w={60} $align="center"><Label>ENG</Label><Label>IN</Label></Lines>
          <TrayGlyph $ml={28} $top={32} $w={34} $h={28} viewBox="0 0 34 28"><path d="M1.500 10.500a22 22 0 0 1 31 0M6.500 15.500a15 15 0 0 1 21 0M11.500 20.500a8 8 0 0 1 11 0" stroke="#fff" strokeWidth="2.200" /><circle cx="17" cy="23.500" r="2.800" fill="#fff" /></TrayGlyph>
          <TrayGlyph $ml={15} $top={30} $w={34} $h={32} viewBox="0 0 34 32"><path d="M1.500 11.500H6l7-7v23l-7-7H1.500z" stroke="#fff" strokeWidth="2" strokeLinejoin="round" /><path d="M17 11c2.500 3 2.500 7 0 10M21 7c5 5.500 5 12.500 0 18M25.500 2.500c7.500 8 7.500 19 0 27" stroke="#fff" strokeWidth="2" /></TrayGlyph>
          <TrayGlyph $ml={14} $top={28} $w={34} $h={32} viewBox="0 0 34 32"><path d="M15 8h10c2 0 3 1 3 3v14c0 2-1 3-3 3H3" stroke="#fff" strokeWidth="2.200" /><path d="M29 15h3.500v6H29z" fill="#fff" /><path d="M12 0c3 5 4 12 1 16-1.500 2-4 3-6.500 2.500L2 25 .500 24l3.500-6C0 11 4 6 12 0z" fill="#fff" /><path d="M10 8c0 4-2 8-5 11" stroke="#1c1c1c" strokeWidth="1.200" /></TrayGlyph>
          <Clock>
            <Label $ls={-0.5}>13:00</Label>
            <Label $ls={0.3}>06-10-2023</Label>
          </Clock>
          <TrayGlyph $ml={16} $top={31} $w={28} $h={32} viewBox="0 0 28 32"><path d="M14 0c6 0 10 4 10 10v8l3.500 5.500c.5 1-.2 1.500-1 1.500h-25c-.8 0-1.500-.5-1-1.500L4 18v-8C4 4 8 0 14 0zM9 27h10c-.5 2.500-2.500 4-5 4s-4.500-1.500-5-4z" fill="#99ebff" /></TrayGlyph>
        </Tray>
      </Taskbar>
    </Screen>
  );
}
